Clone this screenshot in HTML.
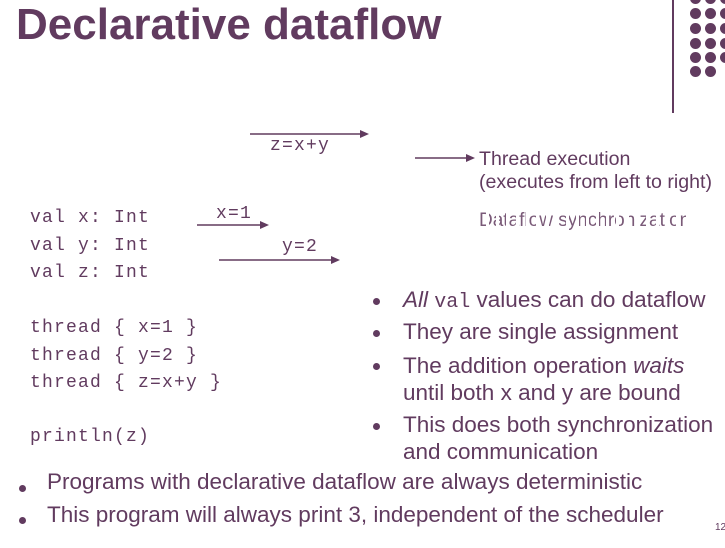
<!DOCTYPE html>
<html><head><style>
body{margin:0;width:725px;height:548px;background:#fff;position:relative;overflow:hidden;color:#613b5f;font-family:"Liberation Sans",sans-serif}
.a{position:absolute;white-space:nowrap}
.t{left:16px;top:0px;font-size:44px;font-weight:bold}
.m{font-family:"Liberation Mono",monospace;font-size:18px;letter-spacing:1.2px}
.b{font-size:22.5px}
.d{position:absolute;width:11px;height:11px;border-radius:50%;background:#613b5f}
.dot{position:absolute;width:7px;height:7px;border-radius:50%;background:#613b5f}
</style></head><body>
<div class="a t">Declarative dataflow</div>
<div style="position:absolute;left:672px;top:0;width:2px;height:113px;background:#613b5f"></div>
<div class="d" style="left:690px;top:-7px"></div><div class="d" style="left:705px;top:-7px"></div><div class="d" style="left:720px;top:-7px"></div>
<div class="d" style="left:690px;top:8px"></div><div class="d" style="left:705px;top:8px"></div><div class="d" style="left:720px;top:8px"></div>
<div class="d" style="left:690px;top:23px"></div><div class="d" style="left:705px;top:23px"></div><div class="d" style="left:720px;top:23px"></div>
<div class="d" style="left:690px;top:38px"></div><div class="d" style="left:705px;top:38px"></div><div class="d" style="left:720px;top:38px"></div>
<div class="d" style="left:690px;top:52px"></div><div class="d" style="left:705px;top:52px"></div><div class="d" style="left:720px;top:52px"></div>
<div class="d" style="left:690px;top:66px"></div><div class="d" style="left:705px;top:66px"></div>
<svg class="a" style="left:0;top:0" width="725" height="548">
<g stroke="#613b5f" stroke-width="1.5" fill="#613b5f">
<line x1="250" y1="134" x2="366" y2="134"/><path d="M360 130 L369 134 L360 138Z" stroke="none"/>
<line x1="415" y1="158" x2="473" y2="158"/><path d="M466 154 L475 158 L466 162Z" stroke="none"/>
<line x1="197" y1="225" x2="266" y2="225"/><path d="M260 221 L269 225 L260 229Z" stroke="none"/>
<line x1="219" y1="260" x2="337" y2="260"/><path d="M331 256 L340 260 L331 264Z" stroke="none"/>
</g></svg>
<div class="a m" style="left:270px;top:136px">z=x+y</div>
<div class="a m" style="left:216px;top:204px">x=1</div>
<div class="a m" style="left:282px;top:237px">y=2</div>
<div class="a" style="left:479px;top:148px;font-size:19.6px;line-height:23px">Thread execution<br>(executes from left to right)</div>
<div class="a" style="left:479px;top:210px;font-size:19px;color:#7a5a78;-webkit-mask:repeating-linear-gradient(90deg,#000 0 7px,transparent 7px 10px);mask:repeating-linear-gradient(90deg,#000 0 7px,transparent 7px 10px)">Dataflow synchronization</div>
<div class="a m" style="left:30px;top:205px;line-height:27.5px">val x: Int<br>val y: Int<br>val z: Int</div>
<div class="a m" style="left:30px;top:315px;line-height:27.5px">thread { x=1 }<br>thread { y=2 }<br>thread { z=x+y }</div>
<div class="a m" style="left:30px;top:427px">println(z)</div>
<div class="dot" style="left:373px;top:298px"></div>
<div class="dot" style="left:373px;top:330px"></div>
<div class="dot" style="left:373px;top:363px"></div>
<div class="dot" style="left:373px;top:423px"></div>
<div class="dot" style="left:19px;top:485px"></div>
<div class="dot" style="left:19px;top:517px"></div>
<div class="a b" style="left:403px;top:287px"><i>All</i> <span style="font-family:'Liberation Mono',monospace;font-size:20px">val</span> values can do dataflow</div>
<div class="a b" style="left:403px;top:319px">They are single assignment</div>
<div class="a b" style="left:403px;top:352px;line-height:27px">The addition operation <i>waits</i><br>until both x and y are bound</div>
<div class="a b" style="left:403px;top:411px;line-height:27px">This does both synchronization<br>and communication</div>
<div class="a b" style="left:47px;top:469px">Programs with declarative dataflow are always deterministic</div>
<div class="a b" style="left:47px;top:502px">This program will always print 3, independent of the scheduler</div>
<div class="a" style="left:715px;top:522px;font-size:10px">12</div>
</body></html>
